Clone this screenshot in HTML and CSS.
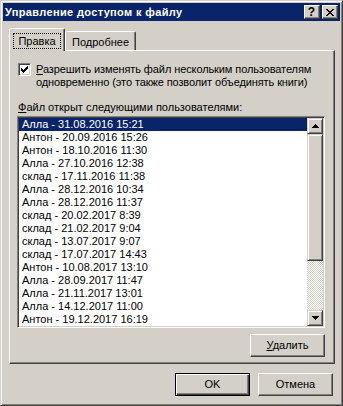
FILE: index.html
```html
<!DOCTYPE html>
<html lang="ru">
<head>
    <meta charset="UTF-8">
    <title>Управление доступом к файлу</title>
    <link rel="stylesheet" href="styles.css">
</head>
<body>
    <div class="window">
        <div class="titlebar">
            <span class="title">Управление доступом к файлу</span>
            <div class="caption-buttons">
                <span class="cap-btn help">?</span>
                <span class="cap-btn close">
                    <svg width="8" height="7" viewBox="0 0 8 7" shape-rendering="crispEdges">
                        <path d="M0 0h2v1h-2z M6 0h2v1h-2z M1 1h2v1h-2z M5 1h2v1h-2z M2 2h4v1h-4z M3 3h2v1h-2z M2 4h4v1h-4z M1 5h2v1h-2z M5 5h2v1h-2z M0 6h2v1h-2z M6 6h2v1h-2z" fill="#000"/>
                    </svg>
                </span>
            </div>
        </div>
        <div class="content">
            <div class="tabs">
                <div class="tab active"><span class="focus">Правка</span></div>
                <div class="tab">Подробнее</div>
            </div>
            <div class="panel">
                <div class="check-row">
                    <span class="checkbox">
                        <svg width="7" height="7" viewBox="0 0 7 7" shape-rendering="crispEdges">
                            <path d="M6 0h1v1h-1z M5 1h2v1h-2z M0 2h1v1h-1z M4 2h3v1h-3z M0 3h2v1h-2z M3 3h3v1h-3z M0 4h5v1h-5z M1 5h3v1h-3z M2 6h1v1h-1z" fill="#000"/>
                        </svg>
                    </span>
                    <span class="check-text"><u>Р</u>азрешить изменять файл нескольким пользователям<br>одновременно (это также позволит объединять книги)</span>
                </div>
                <div class="caption"><u>Ф</u>айл открыт следующими пользователями:</div>
                <div class="listbox">
                    <ul class="items">
                        <li class="selected">Алла - 31.08.2016 15:21</li>
                        <li>Антон - 20.09.2016 15:26</li>
                        <li>Антон - 18.10.2016 11:30</li>
                        <li>Алла - 27.10.2016 12:38</li>
                        <li>склад - 17.11.2016 11:38</li>
                        <li>Алла - 28.12.2016 10:34</li>
                        <li>Алла - 28.12.2016 11:37</li>
                        <li>склад - 20.02.2017 8:39</li>
                        <li>склад - 21.02.2017 9:04</li>
                        <li>склад - 13.07.2017 9:07</li>
                        <li>склад - 17.07.2017 14:43</li>
                        <li>Антон - 10.08.2017 13:10</li>
                        <li>Алла - 28.09.2017 11:47</li>
                        <li>Алла - 21.11.2017 13:01</li>
                        <li>Алла - 14.12.2017 11:00</li>
                        <li>Антон - 19.12.2017 16:19</li>
                    </ul>
                    <div class="scrollbar">
                        <div class="sb-btn">
                            <svg width="7" height="4" viewBox="0 0 7 4" shape-rendering="crispEdges">
                                <path d="M3 0h1v1h-1z M2 1h3v1h-3z M1 2h5v1h-5z M0 3h7v1h-7z" fill="#000"/>
                            </svg>
                        </div>
                        <div class="sb-thumb"></div>
                        <div class="sb-track"></div>
                        <div class="sb-btn">
                            <svg width="7" height="4" viewBox="0 0 7 4" shape-rendering="crispEdges">
                                <path d="M0 0h7v1h-7z M1 1h5v1h-5z M2 2h3v1h-3z M3 3h1v1h-1z" fill="#000"/>
                            </svg>
                        </div>
                    </div>
                </div>
                <div class="panel-actions">
                    <button class="btn"><u>У</u>далить</button>
                </div>
            </div>
            <div class="dialog-actions">
                <button class="btn default">OK</button>
                <button class="btn">Отмена</button>
            </div>
        </div>
    </div>
</body>
</html>
```

FILE: styles.css
```css
body { margin: 0; background: #d4d0c8; font-family: "Liberation Sans", Arial, sans-serif; font-size: 11px; line-height: 13px; color: #000; }
u { text-underline-offset: 1px; }

/* window frame */
.window { box-sizing: border-box; width: 343px; height: 406px; background: #d4d0c8; border: 1px solid; border-color: #d4d0c8 #404040 #404040 #d4d0c8; box-shadow: inset 1px 1px #fff, inset -1px -1px #808080; padding: 2px; }
.titlebar { height: 18px; background: #0a246a; display: flex; align-items: center; justify-content: space-between; padding-left: 2px; }
.title { color: #fff; font-weight: bold; white-space: nowrap; letter-spacing: 0.35px; }
.caption-buttons { display: flex; gap: 2px; margin-right: 2px; }
.cap-btn { box-sizing: border-box; width: 16px; height: 14px; background: #d4d0c8; border: 1px solid; border-color: #fff #404040 #404040 #fff; box-shadow: inset -1px -1px #808080; display: flex; align-items: center; justify-content: center; }
.cap-btn.help { font-weight: bold; font-size: 12px; line-height: 12px; padding-right: 1px; }
.cap-btn.close svg { margin-right: 1px; }

.content { padding: 7px 7px 0 6px; }

/* tabs */
.tabs { display: flex; align-items: flex-end; height: 22px; }
.tab { box-sizing: border-box; height: 19px; width: 71px; border: 1px solid; border-bottom: none; border-color: #fff #404040 transparent #fff; border-radius: 2px 2px 0 0; box-shadow: inset -1px 0 #808080; padding-top: 3px; line-height: 14px; text-align: center; background: #d4d0c8; white-space: nowrap; }
.tab.active { position: relative; z-index: 1; width: 56px; height: 23px; margin-bottom: -1px; padding-top: 4px; }
.focus { display: inline-block; border: 1px dotted #000; padding: 0 4px; line-height: 14px; }

.panel { box-sizing: border-box; width: 326px; border: 1px solid; border-color: #fff #404040 #404040 #fff; box-shadow: inset -1px -1px #808080; padding: 12px 0 6px 7px; }

.check-row { display: flex; align-items: flex-start; }
.checkbox { box-sizing: border-box; width: 13px; height: 13px; margin-left: 1px; margin-right: 5px; background: #fff; border: 1px solid; border-color: #808080 #fff #fff #808080; box-shadow: inset 1px 1px #404040, inset -1px -1px #d4d0c8; display: flex; align-items: center; justify-content: center; }
.check-text { white-space: nowrap; letter-spacing: -0.1px; }
.caption { margin-top: 12px; padding-left: 1px; white-space: nowrap; }

/* list */
.listbox { box-sizing: border-box; width: 308px; height: 212px; margin-top: 2px; border: 1px solid; border-color: #808080 #fff #fff #808080; box-shadow: inset 1px 1px #404040, inset -1px -1px #d4d0c8; padding: 1px; display: flex; }
.items { flex: 1; margin: 0; padding: 0; list-style: none; background: #fff; }
.items li { height: 13px; line-height: 13px; padding-left: 3px; white-space: nowrap; }
.items li.selected { background: #0a246a; color: #fff; }

.scrollbar { width: 16px; display: flex; flex-direction: column; }
.sb-btn, .sb-thumb { box-sizing: border-box; background: #d4d0c8; border: 1px solid; border-color: #d4d0c8 #404040 #404040 #d4d0c8; box-shadow: inset 1px 1px #fff, inset -1px -1px #808080; }
.sb-btn { height: 16px; display: flex; align-items: center; justify-content: center; }
.sb-thumb { height: 127px; }
.sb-track { flex: 1; background: repeating-conic-gradient(#fff 0 25%, #d4d0c8 0 50%) 0 0 / 2px 2px; }

/* buttons */
.btn { box-sizing: border-box; width: 75px; height: 23px; padding: 0; background: #d4d0c8; font: inherit; color: #000; border: 1px solid; border-color: #fff #404040 #404040 #fff; box-shadow: inset -1px -1px #808080; }
.btn.default { border-color: #000; box-shadow: inset 1px 1px #fff, inset -1px -1px #404040, inset -2px -2px #808080; }
.panel-actions { width: 308px; margin-top: 6px; display: flex; justify-content: flex-end; }
.dialog-actions { margin-top: 9px; display: flex; justify-content: flex-end; gap: 8px; }
```
